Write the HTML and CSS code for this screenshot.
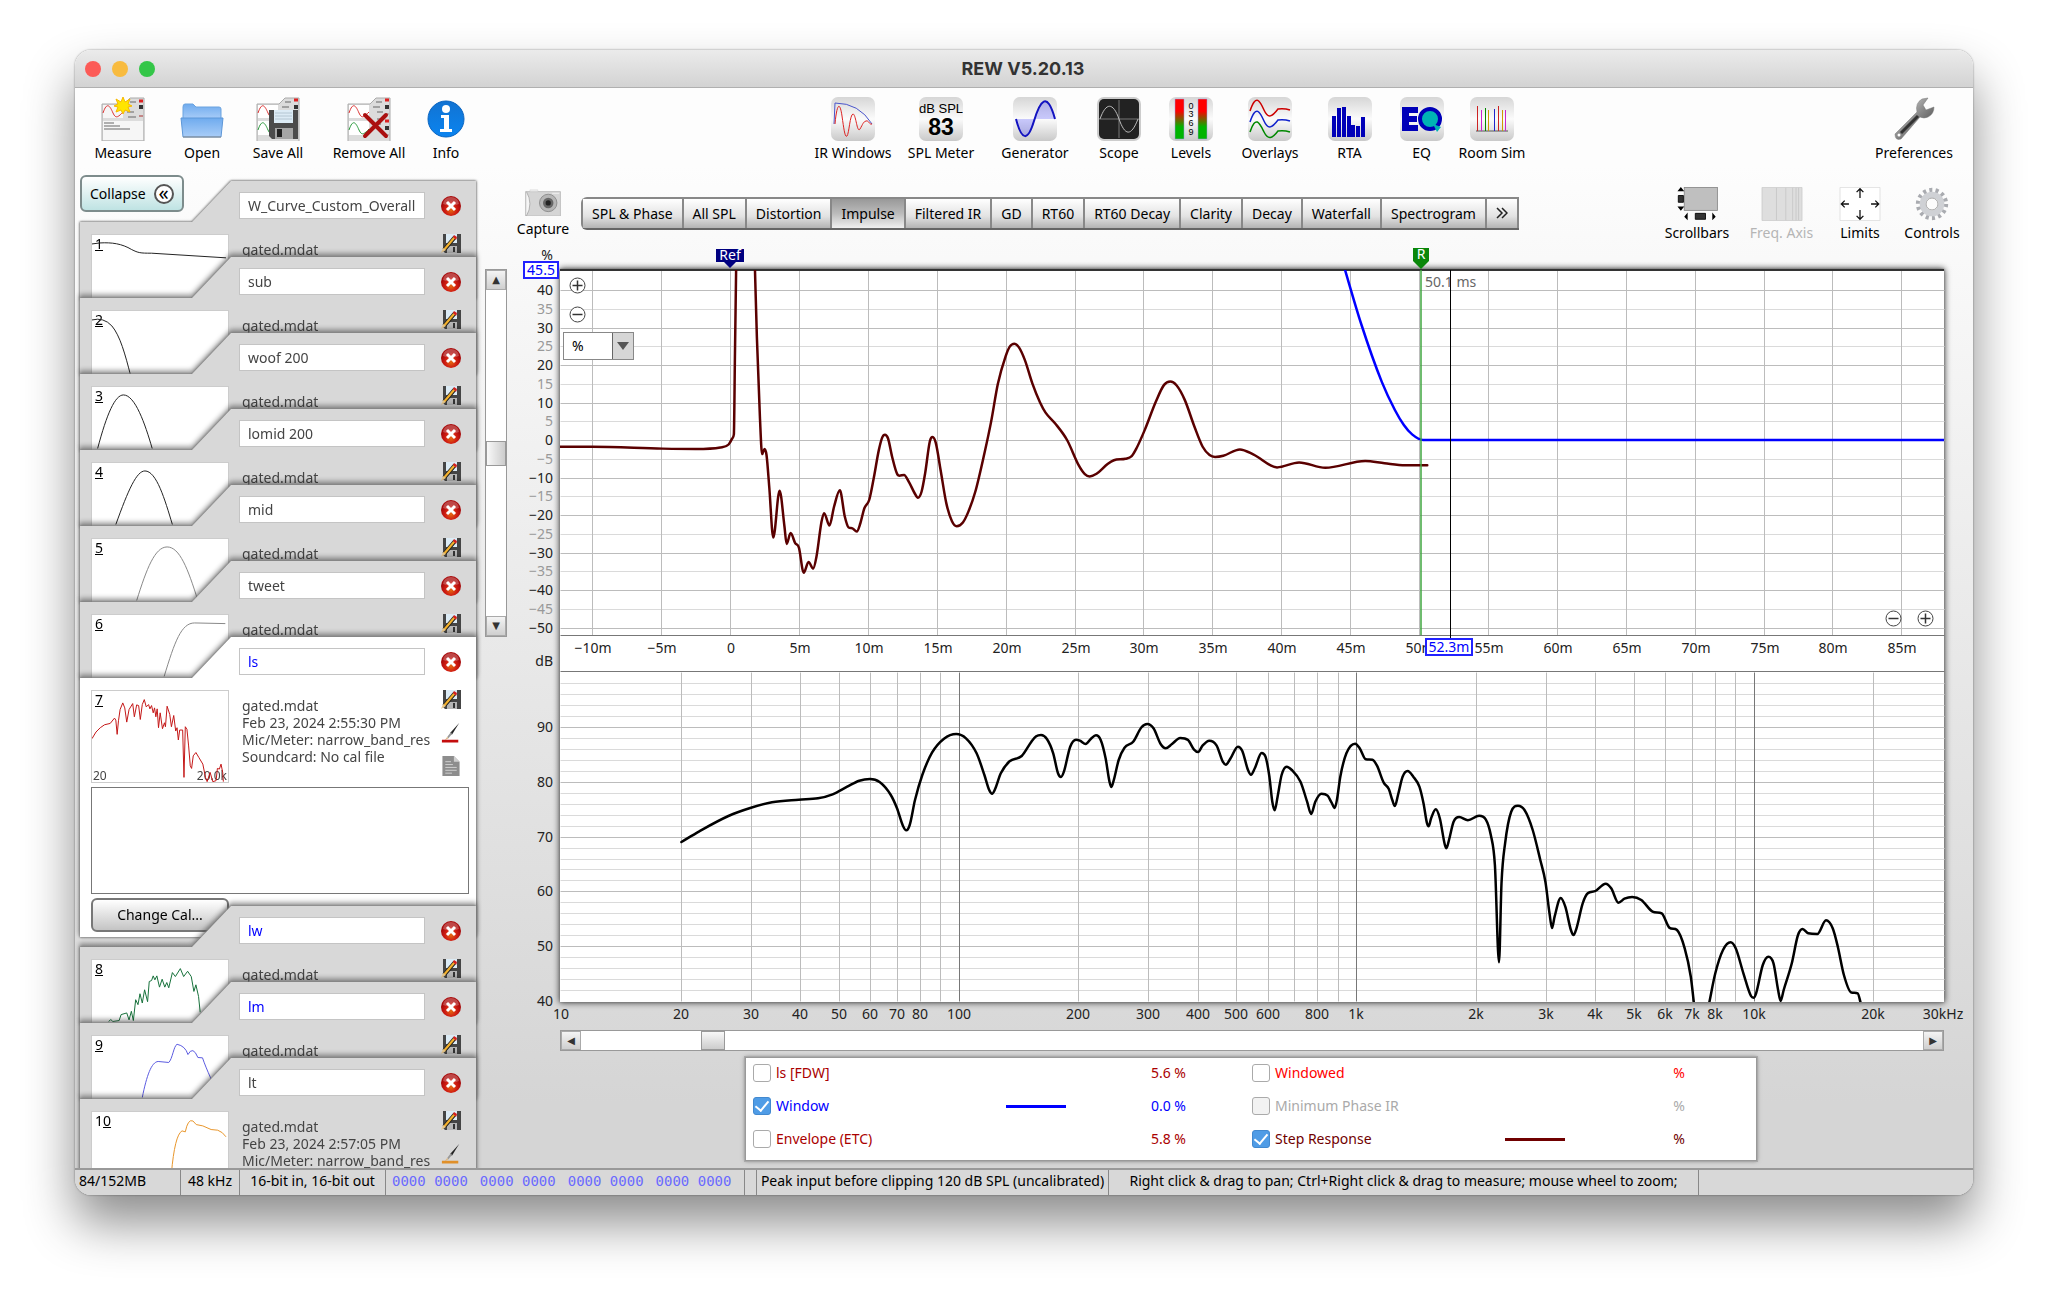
FILE: index.html
```html
<!DOCTYPE html>
<html lang="en">
  <head>
    <title>REW V5.20.13</title>
    <meta charset="utf-8">
    <meta name="viewport" content="width=device-width, initial-scale=1">
    <link rel="stylesheet" href="styles.css">
  </head>
  <body>
    <!-- shared icons -->
    <svg class="defs" aria-hidden="true">
      <defs>
        <linearGradient id="tile" x2="0" y2="1"><stop offset="0" stop-color="#d6d6d6"/><stop offset=".5" stop-color="#fbfbfb"/><stop offset="1" stop-color="#c9c9c9"/></linearGradient>
        <linearGradient id="folder" x2="0" y2="1"><stop offset="0" stop-color="#6fabee"/><stop offset="1" stop-color="#a9cdf8"/></linearGradient>
        <linearGradient id="steel" x2="1" y2="1"><stop offset="0" stop-color="#eee"/><stop offset=".5" stop-color="#888"/><stop offset="1" stop-color="#333"/></linearGradient>
        <linearGradient id="level" x2="0" y2="1"><stop offset=".3" stop-color="#f00"/><stop offset=".7" stop-color="#00b400"/></linearGradient>
        <linearGradient id="info" x2="0" y2="1"><stop offset="0" stop-color="#1273d2"/><stop offset="1" stop-color="#0a84f0"/></linearGradient>
        <radialGradient id="red" cy=".7"><stop offset="0" stop-color="#e46a10"/><stop offset=".6" stop-color="#cf1b12"/><stop offset="1" stop-color="#a80a0a"/></radialGradient>
      </defs>
      <symbol id="i-delete" viewBox="0 0 20 20">
        <circle cx="10" cy="10" r="10" fill="url(#red)"/>
        <path d="M2 8a8 7 0 0 1 16 0q-8 3-16 0" fill="#fff" opacity=".25"/>
        <path d="M6 6l8 8M14 6l-8 8" stroke="#fff" stroke-width="3"/>
      </symbol>
      <symbol id="i-save" viewBox="0 0 20 20">
        <path d="M2 0h18v19H4l-2-2z" fill="#454545"/>
        <path d="M5 0h11v9H5z" fill="#dcebf5"/>
        <path d="M6 12h10v7H6z" fill="#b5b5b5"/><path d="M12 13h2v5h-2z" fill="#333"/>
        <path d="M14 3L3 16" stroke="#222" stroke-width="4"/>
        <path d="M14 3L3 16" stroke="#f3b02c" stroke-width="2.500"/>
        <path d="M14 5L4 17" stroke="#222" stroke-width=".7"/>
        <path d="M13 1l3 2-1 3-3-3z" fill="#d21f1f"/><path d="M0 19l2-5 3 2z" fill="#e8c98e"/>
      </symbol>
      <symbol id="i-brush" viewBox="0 0 20 22">
        <path d="M19 0L9 11l2 2z" fill="#222"/><path d="M10 10l-4 5 1 2 4-5z" fill="#999"/><path d="M6 15l-3 4 4-2z" fill="#d9b98a"/>
        <path d="M0 20h18" stroke="currentColor" stroke-width="3"/>
      </symbol>
      <symbol id="i-notes" viewBox="0 0 20 21">
        <path d="M1 0h12l6 6v15H1z" fill="#8d8d8d"/><path d="M13 0l6 6h-6z" fill="#d0d0d0"/>
        <path d="M4 6h6M4 9h8M4 12h12M4 15h12M4 18h7" stroke="#d3d3d3" stroke-width="1"/>
      </symbol>
      <symbol id="i-sheet" viewBox="0 0 44 44">
        <path d="M1 44V7h22l6-6h14v43" fill="#dcdcdc" stroke="#aaa"/>
        <path d="M2 8h20v13H2zM2 24h20v14H2z" fill="#fff"/>
        <path d="M2 16c4-12 7-7 10 0s6 3 10-1" fill="none" stroke="#d33"/>
        <path d="M2 33c4-12 7-7 10 0s6 3 10-1" fill="none" stroke="#2a9a3c"/>
        <path d="M29 5h6M26 10h7M30 15h6M30 22h6M28 27h6" stroke="#666"/>
        <path d="M38 3h4M38 24h4" stroke="#d22" stroke-width="3"/><path d="M38 10h4M38 31h4" stroke="#333" stroke-width="4"/><path d="M38 17h4M38 38h4" stroke="#a88"/>
      </symbol>
      <symbol id="i-plus" viewBox="0 0 17 17"><circle cx="8.500" cy="8.500" r="7.500" fill="#fff" stroke="#444"/><path d="M3.500 8.500h10M8.500 3.500v10" stroke="#333" stroke-width="1.500"/></symbol>
      <symbol id="i-minus" viewBox="0 0 17 17"><circle cx="8.500" cy="8.500" r="7.500" fill="#fff" stroke="#444"/><path d="M3.500 8.500h10" stroke="#333" stroke-width="1.500"/></symbol>
    </svg>

    <div class="window">
      <header class="titlebar">
        <span class="light light-close"></span>
        <span class="light light-min"></span>
        <span class="light light-max"></span>
        <h1>REW V5.20.13</h1>
      </header>

      <nav class="toolbar">
        <div class="tools tools-file">
          <button class="tool"><svg viewBox="0 0 44 44">
            <path d="M1 44V7h22l6-6h14v43z" fill="#dcdcdc" stroke="#aaa"/>
            <path d="M2 8h20v13H2zM2 24h40v19H2z" fill="#f6f6f6"/>
            <path d="M2 16c4-12 7-7 10 0s6 3 10-1" fill="none" stroke="#d33"/>
            <path d="M3 26h10M3 29h16M3 32h26M29 5h6M26 15h7M27 20h8" stroke="#666"/>
            <path d="M38 4h4" stroke="#d22" stroke-width="3"/><path d="M38 10h4" stroke="#333" stroke-width="4"/><path d="M38 19h4" stroke="#a33"/>
            <path d="M22 0l2 5 5-3-2 5 4 2-4 1 2 5-5-2-2 4-2-4-5 2 2-5-4-1 4-2-2-5 5 3z" fill="#ffe500" stroke="#f5b800"/></svg>Measure</button>
          <button class="tool"><svg viewBox="0 0 44 44">
            <path d="M3 22V10q0-3 2-3h8l3 3h23q2 0 2 2v10z" fill="url(#folder)" stroke="#6ba3df"/>
            <path d="M1 21h42l-2 19H3z" fill="url(#folder)" stroke="#5d97d8"/><path d="M3 40h38" stroke="#888"/></svg>Open</button>
          <button class="tool"><svg viewBox="0 0 44 44"><use href="#i-sheet"/>
            <path d="M13 13h29v29H16l-3-3z" fill="#4b4b4b"/><path d="M18 13h19v13H18z" fill="#dcebf5"/><path d="M19 16h17M19 19h17M19 22h17" stroke="#b4c6d2"/>
            <path d="M19 31h18v11H19z" fill="#a5a5a5"/><path d="M21 32h5v8h-5z" fill="#222"/></svg>Save All</button>
          <button class="tool"><svg viewBox="0 0 44 44"><use href="#i-sheet"/>
            <path d="M18 18l21 21M39 18L18 39" stroke="#ab1010" stroke-width="4" stroke-linecap="round"/></svg>Remove All</button>
          <button class="tool"><svg viewBox="0 0 44 44">
            <circle cx="22" cy="22" r="18" fill="url(#info)" stroke="#0a64c0"/>
            <circle cx="22" cy="12" r="4" fill="#fff"/><path d="M17 18h8v14h3v3H16v-3h4V21h-3z" fill="#fff"/></svg>Info</button>
        </div>

        <div class="tools tools-view">
          <button class="tool"><svg viewBox="0 0 44 44"><rect width="44" height="44" rx="7" fill="url(#tile)"/>
            <path d="M3 27l1-21q24 0 37 21" fill="none" stroke="#4a55cc"/>
            <path d="M4 27c2-22 5-22 7-8s3 22 5 20 3-22 6-22 4 20 7 15 3-7 6-8 3 4 6 3" fill="none" stroke="#d22"/></svg>IR Windows</button>
          <button class="tool"><svg viewBox="0 0 44 44"><rect width="44" height="44" rx="7" fill="url(#tile)"/>
            <text class="spl-unit" x="22" y="16">dB SPL</text><text class="spl-value" x="22" y="38">83</text></svg>SPL Meter</button>
          <button class="tool"><svg viewBox="0 0 44 44"><rect width="44" height="44" rx="7" fill="url(#tile)"/>
            <path d="M3 22h39C36-1 30-1 24 16S12 54 3 22" fill="#00f" opacity=".2"/>
            <path d="M3 22c6 23 12 22 18 2S34-7 42 22" fill="none" stroke="#1313c0" stroke-width="2"/></svg>Generator</button>
          <button class="tool"><svg viewBox="0 0 44 44"><rect width="44" height="44" rx="7" fill="#ccc"/><rect x="2" y="2" width="40" height="40" rx="5" fill="#222"/>
            <path d="M2 22h40M22 3v38" stroke="#777"/><path d="M3 22c6-17 13-17 19 0s12 18 19 0" fill="none" stroke="#bbb"/></svg>Scope</button>
          <button class="tool"><svg viewBox="0 0 44 44"><rect width="44" height="44" rx="7" fill="url(#tile)"/>
            <path d="M6 2h9v40H6zM29 2h9v40h-9z" fill="url(#level)" stroke="#99d" stroke-width=".5"/>
            <text class="level-text" x="22" y="12">0</text><text class="level-text" x="22" y="20">3</text><text class="level-text" x="22" y="29">6</text><text class="level-text" x="22" y="38">9</text></svg>Levels</button>
          <button class="tool"><svg viewBox="0 0 44 44"><rect width="44" height="44" rx="7" fill="url(#tile)"/>
            <g fill="none" stroke-width="1.500"><path d="M2 14C8-4 12 4 16 13s8 7 14-1q6-1 12 1" stroke="#c00"/><path d="M2 25c6-18 10-10 14-1s8 7 14-1q6-1 12 1" stroke="#12c"/><path d="M2 35c6-18 10-8 14 0s8 7 14-1q6-1 12 1" stroke="#080"/></g></svg>Overlays</button>
          <button class="tool"><svg viewBox="0 0 44 44"><rect width="44" height="44" rx="7" fill="url(#tile)"/>
            <path d="M4 19h4v21H4zM9 11h4v29H9zM14 10h4v30h-4zM19 19h4v21h-4zM23 28h4v12h-4zM28 29h4v11h-4zM33 20h4v20h-4z" fill="#0000b8"/></svg>RTA</button>
          <button class="tool"><svg viewBox="0 0 44 44"><rect width="44" height="44" rx="7" fill="url(#tile)"/>
            <circle cx="30" cy="22" r="10" fill="#00b4b4" stroke="#0000b8" stroke-width="4"/>
            <path d="M2 10h16v6H9v3h8v6H9v3h9v6H2z" fill="#0000b8"/><path d="M33 27l8 3-4 5z" fill="#00b4b4"/></svg>EQ</button>
          <button class="tool"><svg viewBox="0 0 44 44"><rect width="44" height="44" rx="7" fill="url(#tile)"/>
            <path d="M6 34h32" stroke="#555"/><path d="M7.500 9v25M28.500 9v25" stroke="#c22"/><path d="M11.500 13v21M35.500 13v21" stroke="#c2c"/><path d="M15.500 11v23" stroke="#080"/><path d="M18.500 13v21M32.500 13v21" stroke="#c90"/><path d="M24.500 12v22" stroke="#22c"/></svg>Room Sim</button>
        </div>

        <div class="tools">
          <button class="tool"><svg viewBox="0 0 44 44">
            <path d="M3 37L25 15q-2-9 5-13l6-1-5 7 3 5 8-3q0 7-6 10-4 2-8 0L9 42q-6 2-6-5" fill="url(#steel)" stroke="#777" stroke-width=".5"/>
            <path d="M9 36l17-17" stroke="#333" stroke-width="3"/><circle cx="7" cy="38" r="1.500" fill="#fff"/></svg>Preferences</button>
        </div>
      </nav>

      <main class="main">
        <aside class="sidebar">
          <button class="collapse">Collapse <span>«</span></button>
          <ol class="cards">
            <li class="card"><div class="card-body">
              <div class="card-head"><input aria-label="Measurement 1 name" value="W_Curve_Custom_Overall"><button class="icon" aria-label="Remove"><svg><use href="#i-delete"/></svg></button></div>
              <div class="card-info">
                <div class="thumb"><b>1</b><svg viewBox="0 0 411 276"><path d="M0 27L24 24C60 22 90 26 120 44C140 54 145 55 180 55L405 69" stroke="#222"/></svg></div>
                <p>gated.mdat</p>
                <div class="card-actions"><button class="icon" aria-label="Save"><svg><use href="#i-save"/></svg></button></div>
              </div>
            </div></li>
            <li class="card"><div class="card-body">
              <div class="card-head"><input aria-label="Measurement 2 name" value="sub"><button class="icon" aria-label="Remove"><svg><use href="#i-delete"/></svg></button></div>
              <div class="card-info">
                <div class="thumb"><b>2</b><svg viewBox="0 0 411 276"><path d="M0 27Q35 18 60 45C85 75 100 130 117 196" stroke="#222"/></svg></div>
                <p>gated.mdat</p>
                <div class="card-actions"><button class="icon" aria-label="Save"><svg><use href="#i-save"/></svg></button></div>
              </div>
            </div></li>
            <li class="card"><div class="card-body">
              <div class="card-head"><input aria-label="Measurement 3 name" value="woof 200"><button class="icon" aria-label="Remove"><svg><use href="#i-delete"/></svg></button></div>
              <div class="card-info">
                <div class="thumb"><b>3</b><svg viewBox="0 0 411 276"><path d="M17 186C45 80 70 24 95 24C130 24 160 110 182 186" stroke="#222"/></svg></div>
                <p>gated.mdat</p>
                <div class="card-actions"><button class="icon" aria-label="Save"><svg><use href="#i-save"/></svg></button></div>
              </div>
            </div></li>
            <li class="card"><div class="card-body">
              <div class="card-head"><input aria-label="Measurement 4 name" value="lomid 200"><button class="icon" aria-label="Remove"><svg><use href="#i-delete"/></svg></button></div>
              <div class="card-info">
                <div class="thumb"><b>4</b><svg viewBox="0 0 411 276"><path d="M72 186C110 80 135 24 160 24C195 24 220 110 243 186" stroke="#222"/></svg></div>
                <p>gated.mdat</p>
                <div class="card-actions"><button class="icon" aria-label="Save"><svg><use href="#i-save"/></svg></button></div>
              </div>
            </div></li>
            <li class="card"><div class="card-body">
              <div class="card-head"><input aria-label="Measurement 5 name" value="mid"><button class="icon" aria-label="Remove"><svg><use href="#i-delete"/></svg></button></div>
              <div class="card-info">
                <div class="thumb"><b>5</b><svg viewBox="0 0 411 276"><path d="M135 186C165 90 190 24 227 24C265 24 290 90 320 186" stroke="#888"/></svg></div>
                <p>gated.mdat</p>
                <div class="card-actions"><button class="icon" aria-label="Save"><svg><use href="#i-save"/></svg></button></div>
              </div>
            </div></li>
            <li class="card"><div class="card-body">
              <div class="card-head"><input aria-label="Measurement 6 name" value="tweet"><button class="icon" aria-label="Remove"><svg><use href="#i-delete"/></svg></button></div>
              <div class="card-info">
                <div class="thumb"><b>6</b><svg viewBox="0 0 411 276"><path d="M218 186C250 80 270 24 310 24L403 26" stroke="#888"/></svg></div>
                <p>gated.mdat</p>
                <div class="card-actions"><button class="icon" aria-label="Save"><svg><use href="#i-save"/></svg></button></div>
              </div>
            </div></li>
            <li class="card selected"><div class="card-body">
              <div class="card-head"><input class="linked" aria-label="Measurement 7 name" value="ls"><button class="icon" aria-label="Remove"><svg><use href="#i-delete"/></svg></button></div>
              <div class="card-info">
                <div class="thumb"><b>7</b><svg viewBox="0 0 411 276"><polyline stroke="#c41616" points="0,144 12,124 25,111 38,102 55,98 68,82 72,88 76,131 80,90 85,56 93,36 99,51 105,94 112,56 123,38 128,78 135,42 141,44 146,86 152,41 158,26 164,48 171,41 175,54 180,44 185,66 189,51 193,78 197,54 201,111 206,66 213,114 219,96 222,108 227,46 235,71 240,108 247,74 253,121 257,111 261,148 265,118 274,118 278,261 282,108 287,116 292,166 297,226 301,234 306,196 314,186 323,201 335,221 343,261 348,274 357,246 365,274 375,271 379,234 385,236 390,221 395,246 397,274"/></svg><small>20</small><small>20.0k</small></div>
                <p>gated.mdat<br>Feb 23, 2024 2:55:30 PM<br>Mic/Meter: narrow_band_res<br>Soundcard: No cal file</p>
                <div class="card-actions">
                  <button class="icon" aria-label="Save"><svg><use href="#i-save"/></svg></button>
                  <button class="icon brush-red" aria-label="Trace colour"><svg><use href="#i-brush"/></svg></button>
                  <button class="icon" aria-label="Notes"><svg><use href="#i-notes"/></svg></button>
                </div>
              </div>
              <textarea aria-label="Measurement notes"></textarea>
              <button class="change-cal">Change Cal...</button>
            </div></li>
            <li class="card"><div class="card-body">
              <div class="card-head"><input class="linked" aria-label="Measurement 8 name" value="lw"><button class="icon" aria-label="Remove"><svg><use href="#i-delete"/></svg></button></div>
              <div class="card-info">
                <div class="thumb"><b>8</b><svg viewBox="0 0 411 276"><polyline stroke="#16713a" points="50,186 57,180 63,186 82,183 88,165 105,160 112,181 119,155 125,183 132,120 139,135 145,102 152,130 159,90 168,126 173,65 180,62 185,48 190,60 196,48 204,82 212,58 220,82 226,68 232,84 243,38 252,50 267,26 277,50 289,34 300,50 308,95 314,75 322,110 327,158"/></svg></div>
                <p>gated.mdat</p>
                <div class="card-actions"><button class="icon" aria-label="Save"><svg><use href="#i-save"/></svg></button></div>
              </div>
            </div></li>
            <li class="card"><div class="card-body">
              <div class="card-head"><input class="linked" aria-label="Measurement 9 name" value="lm"><button class="icon" aria-label="Remove"><svg><use href="#i-delete"/></svg></button></div>
              <div class="card-info">
                <div class="thumb"><b>9</b><svg viewBox="0 0 411 276"><path d="M152 186C165 120 180 78 200 77L232 80C243 70 247 30 257 25Q282 30 290 56Q305 28 320 65L334 66Q342 90 360 130" stroke="#5a5ae0"/></svg></div>
                <p>gated.mdat</p>
                <div class="card-actions"><button class="icon" aria-label="Save"><svg><use href="#i-save"/></svg></button></div>
              </div>
            </div></li>
            <li class="card"><div class="card-body">
              <div class="card-head"><input aria-label="Measurement 10 name" value="lt"><button class="icon" aria-label="Remove"><svg><use href="#i-delete"/></svg></button></div>
              <div class="card-info">
                <div class="thumb"><b><i>1</i>0</b><svg viewBox="0 0 411 276"><path d="M240 186Q250 70 272 57L282 60Q290 20 305 27L315 38L335 42L360 53L380 55Q395 60 405 75" stroke="#e8952a"/></svg></div>
                <p>gated.mdat<br>Feb 23, 2024 2:57:05 PM<br>Mic/Meter: narrow_band_res</p>
                <div class="card-actions">
                  <button class="icon" aria-label="Save"><svg><use href="#i-save"/></svg></button>
                  <button class="icon brush-orange" aria-label="Trace colour"><svg><use href="#i-brush"/></svg></button>
                </div>
              </div>
            </div></li>
          </ol>
        </aside>

        <section class="content">
          <div class="graph-bar">
            <button class="tool capture"><svg viewBox="0 0 40 31">
              <path d="M0 3h40v28H0z" fill="#d5d5d5" stroke="#bbb"/><path d="M5 1h9v2H5zM30 4h9v2h-9z" fill="#eee" stroke="#ccc" stroke-width=".5"/><path d="M1 3q8 14 0 28" fill="#f5f5f5" stroke="#aaa"/>
              <circle cx="26" cy="16" r="10" fill="#b5b5b5" stroke="#888"/><circle cx="26" cy="16" r="6" fill="#666"/><circle cx="26" cy="16" r="3" fill="#222"/></svg>Capture</button>
            <div class="tabs" role="tablist">
              <button role="tab">SPL &amp; Phase</button>
              <button role="tab">All SPL</button>
              <button role="tab">Distortion</button>
              <button role="tab" class="active" aria-selected="true">Impulse</button>
              <button role="tab">Filtered IR</button>
              <button role="tab">GD</button>
              <button role="tab">RT60</button>
              <button role="tab">RT60 Decay</button>
              <button role="tab">Clarity</button>
              <button role="tab">Decay</button>
              <button role="tab">Waterfall</button>
              <button role="tab">Spectrogram</button>
              <button aria-label="More graphs"><svg viewBox="0 0 12 12"><path d="M1 1l5 5-5 5M6 1l5 5-5 5"/></svg></button>
            </div>
            <div class="graph-tools">
              <button class="tool"><svg viewBox="0 0 48 40">
                <rect x="9" y=".5" width="39" height="27" fill="#bfbfbf" stroke="#888"/><path d="M2 10h6v8H2zM22 31h12v7H22z" fill="#333" stroke="#000"/><path d="M1 5l4-5 4 5zM1 23l4 5 4-5zM13 30v9l-4-4zM42 30v9l4-4z"/></svg>Scrollbars</button>
              <button class="tool" disabled><svg viewBox="0 0 48 40"><path d="M.500.500h47v39H.500z" fill="#dedede" stroke="#ccc"/><path d="M17.500 1v38M28.500 1v38M36.500 1v38M40.500 1v38M43.500 1v38" stroke="#c6c6c6"/></svg>Freq. Axis</button>
              <button class="tool"><svg viewBox="0 0 48 40"><path d="M.500.500h47v39H.500z" fill="#fff" stroke="#ddd"/><path d="M24 13V2M20 6l4-4 4 4M24 27v11M20 34l4 4 4-4M11 20H2M6 16l-4 4 4 4M37 20h9M42 16l4 4-4 4" fill="none" stroke="#111" stroke-width="1.500"/></svg>Limits</button>
              <button class="tool"><svg viewBox="0 0 48 40"><circle cx="24" cy="20" r="16" fill="none" stroke="#a9abb0" stroke-width="6" stroke-dasharray="3.500 3.680"/><circle cx="24" cy="20" r="11" fill="#fafafa" stroke="#cfd1d5" stroke-width="7"/><circle cx="24" cy="20" r="7" fill="#fcfcfc" stroke="#999"/></svg>Controls</button>
            </div>
          </div>

          <div class="graph-row">
            <div class="scrollbar scrollbar-v"><button aria-label="Up">▲</button><span></span><button aria-label="Down">▼</button></div>
            <div class="graph">
              <svg id="graph" viewBox="0 0 1458 790" role="img" aria-label="Step response and SPL"></svg>
              <button class="zoom zoom-y-in" aria-label="Zoom in vertically"><svg><use href="#i-plus"/></svg></button>
              <button class="zoom zoom-y-out" aria-label="Zoom out vertically"><svg><use href="#i-minus"/></svg></button>
              <select class="unit" aria-label="Y axis unit"><option>%</option><option>dBFS</option></select>
              <button class="zoom zoom-x-out" aria-label="Zoom out horizontally"><svg><use href="#i-minus"/></svg></button>
              <button class="zoom zoom-x-in" aria-label="Zoom in horizontally"><svg><use href="#i-plus"/></svg></button>
            </div>
          </div>

          <div class="scrollbar scrollbar-h"><button aria-label="Left">◀</button><span></span><button aria-label="Right">▶</button></div>

          <div class="legend">
            <div class="trace ls"><input type="checkbox" id="t-fdw"><label for="t-fdw">ls [FDW]</label><hr class="off"><output>5.6 %</output></div>
            <div class="trace windowed"><input type="checkbox" id="t-windowed"><label for="t-windowed">Windowed</label><hr class="off"><output>%</output></div>
            <div class="trace window-fn"><input type="checkbox" id="t-window" checked><label for="t-window">Window</label><hr><output>0.0 %</output></div>
            <div class="trace unavailable"><input type="checkbox" id="t-min" disabled><label for="t-min">Minimum Phase IR</label><hr class="off"><output>%</output></div>
            <div class="trace envelope"><input type="checkbox" id="t-etc"><label for="t-etc">Envelope (ETC)</label><hr class="off"><output>5.8 %</output></div>
            <div class="trace step"><input type="checkbox" id="t-step" checked><label for="t-step">Step Response</label><hr><output>%</output></div>
          </div>
        </section>
      </main>

      <footer class="status">
        <span class="s-memory">84/152MB</span>
        <span class="s-rate">48 kHz</span>
        <span class="s-bits">16-bit in, 16-bit out</span>
        <span class="s-digits"><i>0000 0000</i><i>0000 0000</i><i>0000 0000</i><i>0000 0000</i></span>
        <span class="s-gap"></span>
        <span class="s-peak">Peak input before clipping 120 dB SPL (uncalibrated)</span>
        <span class="s-hint">Right click &amp; drag to pan; Ctrl+Right click &amp; drag to measure; mouse wheel to zoom;</span>
      </footer>
    </div>
    <script src="graph.js"></script>
  </body>
</html>
```
FILE: styles.css
```css
:root {
  --font-size: 14px;
}

* {
  box-sizing: border-box;
}

body {
  background: #fff;
  color: #000;
  display: flex;
  font-family: "Noto Sans", "Open Sans", sans-serif;
  font-size: var(--font-size);
  height: 100vh;
  line-height: 18px;
  margin: 0;
  padding: 50px 75px 98px;
}

button,
input,
select,
textarea {
  color: inherit;
  font: inherit;
  margin: 0;
}

button {
  background: none;
  border: 0;
  padding: 0;
}

.defs {
  height: 0;
  position: absolute;
  width: 0;
}

.window {
  background: linear-gradient(#fdfdfd 0, #fdfdfd 10%, #d5d5d5 92%);
  border-radius: 16px;
  box-shadow: 0 0 2px rgba(0, 0, 0, 0.5), 0 28px 50px rgba(0, 0, 0, 0.45);
  display: flex;
  flex: 1;
  flex-direction: column;
  min-width: 0;
  overflow: hidden;
}

/* title bar */
.titlebar {
  align-items: center;
  background: linear-gradient(#ebebeb, #d3d3d3);
  border-bottom: 1px solid #b0b0b0;
  display: flex;
  flex: none;
  gap: 11px;
  height: 38px;
  padding: 0 10px;
}

.light {
  border-radius: 50%;
  height: 16px;
  width: 16px;
}

.light-close { background: #fc5b57; }
.light-min { background: #f8bb3f; }
.light-max { background: #34c648; }

.titlebar h1 {
  color: #333;
  flex: 1;
  font-family: Inter, sans-serif;
  font-size: 18px;
  font-weight: 700;
  margin: 0 83px 0 0;
  text-align: center;
}

/* toolbar */
.toolbar {
  display: flex;
  flex: none;
  height: 86px;
  justify-content: space-between;
  padding: 9px 14px 0 8px;
}

.tools {
  display: grid;
}

.tools-file {
  grid-template-columns: 80px 78px 74px 108px 46px;
}

.tools-view {
  grid-template-columns: 88px 88px 100px 68px 76px 82px 77px 67px 74px;
}

.tool {
  align-items: center;
  display: flex;
  flex-direction: column;
  gap: 3px;
  justify-content: flex-start;
  min-width: 0;
  white-space: nowrap;
}

.tool svg {
  height: 44px;
  width: 44px;
}

.tools:last-child {
  width: 90px;
}

.tool:disabled {
  color: #b5b5b5;
}

.spl-unit,
.spl-value,
.level-text {
  font-family: "Liberation Sans", sans-serif;
  text-anchor: middle;
}

.spl-unit { font-size: 13px; }
.spl-value { font-size: 23px; font-weight: 700; }
.level-text { font-size: 9px; }

.main {
  display: flex;
  flex: 1;
  min-height: 0;
  overflow: hidden;
}

/* measurement list */
.sidebar {
  flex: none;
  padding: 7px 9px 0 5px;
  position: relative;
  width: 410px;
}

.collapse {
  align-items: center;
  background: linear-gradient(#fff, #bfe3e3);
  border: 2px solid #7d8c8c;
  border-radius: 6px;
  display: flex;
  gap: 8px;
  height: 37px;
  left: 5px;
  padding: 0 8px;
  position: absolute;
  top: 1px;
}

.collapse span {
  border: 2px solid #555;
  border-radius: 50%;
  background: #fff;
  font-size: 20px;
  height: 20px;
  line-height: 14px;
  width: 20px;
}

.cards {
  list-style: none;
  margin: 0;
  padding: 0;
}

/* each card is taller than its slot and the next one lies over it */
.card {
  filter: drop-shadow(0 0 1px #777) drop-shadow(0 0 1px #888) drop-shadow(0 -3px 2px rgba(0, 0, 0, 0.35));
  height: 76px;
  position: relative;
}

.card:first-child {
  filter: drop-shadow(0 0 1px #777) drop-shadow(0 0 1px #888);
}

.card.selected {
  height: 269px;
}

.card-body {
  background: #d8d8d8;
  clip-path: polygon(0 41px, 112px 41px, 151px 0, 100% 0, 100% 100%, 0 100%);
  height: 118px;
  padding: 11px 7px 0 11px;
}

.card.selected .card-body {
  background: #fff;
  height: 300px;
}

.card:last-child .card-body {
  height: 200px;
}

.card-head {
  align-items: center;
  display: flex;
  gap: 16px;
  margin-left: 148px;
  padding-right: 8px;
}

.card-head input {
  background: #fff;
  border: 1px solid #c4c4c4;
  color: #444;
  flex: 1;
  height: 27px;
  min-width: 0;
  padding: 0 8px;
}

.card-head input.linked {
  color: #00f;
}

.icon,
.icon svg {
  display: block;
  height: 20px;
  width: 20px;
}

.card-info {
  color: #444;
  display: flex;
  gap: 13px;
  height: 93px;
  margin-top: 15px;
}

.card-info p {
  flex: 1;
  line-height: 17px;
  margin: 7px 0 0;
  min-width: 0;
  white-space: nowrap;
}

.thumb {
  background: #fff;
  border: 1px solid #ccc;
  display: flex;
  flex-wrap: wrap;
  justify-content: space-between;
  align-content: space-between;
  flex: none;
  padding: 0 1px;
  position: relative;
  width: 138px;
}

.thumb svg {
  inset: 0;
  fill: none;
  position: absolute;
  stroke-width: 3px;
}

.thumb b {
  color: #000;
  flex: 0 0 100%;
  font-weight: 400;
  padding-left: 2px;
  text-decoration: underline;
}

.thumb b i {
  display: inline-block;
  font-style: normal;
  text-decoration: none;
}

.thumb small {
  font-size: 12px;
  line-height: 12px;
}

.card-actions {
  display: flex;
  flex-direction: column;
  gap: 13px;
  margin-right: 8px;
}

.brush-red { color: #c40d0d; }
.brush-orange { color: #e0902a; }

.card textarea {
  border: 1px solid #777;
  display: block;
  height: 107px;
  margin-top: 4px;
  resize: none;
  width: 100%;
}

.change-cal {
  background: linear-gradient(#fff, #c4c4c4);
  border: 2px solid #777;
  border-radius: 6px;
  height: 34px;
  margin-top: 4px;
  width: 138px;
}

/* graph area */
.content {
  flex: 1;
  min-width: 0;
}

.graph-bar {
  align-items: flex-start;
  display: flex;
  height: 66px;
  padding: 10px 7px 0 24px;
}

.graph-bar .capture {
  gap: 4px;
  margin-top: 5px;
  width: 68px;
}

.graph-bar .capture svg {
  height: 27px;
  width: 40px;
}

.tabs {
  border: 2px solid #888;
  border-bottom-color: #666;
  border-radius: 6px 0 0 6px;
  border-right: 0;
  display: flex;
  flex: 0 1 938px;
  height: 33px;
  margin: 13px auto 0 4px;
}

.tabs button {
  background: linear-gradient(#fff, #e2e2e2 60%, #b4b4b4);
  border-right: 2px solid #888;
  flex: 1 0 auto;
  padding: 0 8px;
}

.tabs button.active {
  background: linear-gradient(#999, #bbb 50%, #f0f0f0);
}

.tabs svg {
  fill: none;
  height: 12px;
  stroke: #222;
  stroke-width: 1.5px;
  width: 12px;
}

.graph-tools {
  display: grid;
  grid-template-columns: 88px 81px 76px 68px;
}

.graph-tools .tool {
  gap: 0;
}

.graph-tools .tool svg {
  height: 40px;
  padding: 3px 0;
  width: 48px;
}

.graph-row {
  display: flex;
  gap: 8px;
}

.graph {
  flex: 1;
  min-width: 0;
  position: relative;
}

#graph {
  display: block;
  width: 100%;
}

#graph text {
  fill: #222;
}

#graph text.faint { fill: #999; }
#graph text.note { fill: #666; }
#graph text.cursor { fill: #00f; }
#graph text.marker { fill: #fff; }
#graph .major { stroke: #bcbcbc; }
#graph .minor { stroke: #dadada; }
#graph .decade { stroke: #777; }
#graph .grid { stroke-width: 1px; }

.panel {
  fill: #fff;
  filter: drop-shadow(0 0 1px #777) drop-shadow(0 0 3px rgba(0, 0, 0, 0.8));
}

.zoom,
.unit {
  position: absolute;
}

.zoom svg {
  display: block;
  height: 17px;
  width: 17px;
}

.zoom-y-in { left: 54px; top: 37px; }
.zoom-y-out { left: 54px; top: 66px; }
.zoom-x-out { right: 71px; top: 370px; }
.zoom-x-in { right: 39px; top: 370px; }

.unit {
  appearance: none;
  background:
    linear-gradient(#666, #666) 48px 0 / 1px 100% no-repeat,
    linear-gradient(90deg, #fff 48px, #d6d6d6 48px);
  border: 1px solid #888;
  border-radius: 0;
  height: 28px;
  left: 48px;
  padding: 0 8px;
  top: 92px;
  width: 71px;
}

.graph::after {
  border: 6px solid transparent;
  border-top: 8px solid #555;
  border-bottom: 0;
  content: "";
  left: 102px;
  pointer-events: none;
  position: absolute;
  top: 102px;
}

.scrollbar {
  background: #fff;
  border: 1px solid #999;
  display: flex;
  position: relative;
}

.scrollbar button {
  background: linear-gradient(#f4f4f4, #cfcfcf);
  border: 1px solid #aaa;
  color: #333;
  font-family: "DejaVu Sans", sans-serif;
  font-size: 10px;
  height: 20px;
  line-height: 10px;
  width: 20px;
}

.scrollbar span {
  background: linear-gradient(90deg, #f8f8f8, #ccc);
  border: 1px solid #999;
}

.scrollbar-v {
  flex: none;
  flex-direction: column;
  height: 368px;
  margin-top: 29px;
  width: 22px;
}

.scrollbar-v span {
  height: 25px;
  margin: 151px 0 auto;
}

.scrollbar-h {
  height: 21px;
  margin: 0 29px 0 75px;
}

.scrollbar-h button {
  height: 19px;
}

.scrollbar-h span {
  background: linear-gradient(#f8f8f8, #ccc);
  margin: 0 auto 0 120px;
  width: 24px;
}

.legend {
  background: #fff;
  border: 1px solid #999;
  box-shadow: 0 0 0 1px #aaa, 0 0 4px #777;
  display: grid;
  grid-auto-rows: 33px;
  grid-template-columns: 499px 499px;
  height: 104px;
  margin: 6px auto 0;
  max-width: 1012px;
  padding-left: 7px;
  position: relative;
  left: 22px;
}

.trace {
  align-items: center;
  display: grid;
  grid-template-columns: 18px 225px 60px 115px;
  column-gap: 5px;
  height: 30px;
}

.trace hr {
  border: 0;
  border-top: 3px solid;
  color: inherit;
  margin: 0;
  width: 60px;
}

.trace .off {
  visibility: hidden;
}

.trace output {
  text-align: right;
}

.trace input {
  appearance: none;
  background: #fff;
  border: 1px solid #aaa;
  border-radius: 3px;
  height: 18px;
  width: 18px;
}

.trace input:checked {
  background: #4f9ce6;
  border-color: #4289cf;
  display: grid;
  place-items: center;
}

.trace input:checked::after {
  border: solid #fff;
  border-width: 0 2px 2px 0;
  content: "";
  height: 11px;
  margin-bottom: 3px;
  rotate: 40deg;
  width: 6px;
}

.trace input:disabled {
  background: #f2f2f2;
}

.ls, .envelope { color: #a00; }
.windowed { color: #f00; }
.window-fn { color: #00f; }
.unavailable { color: #aaa; }
.step { color: #700000; }

/* status bar */
.status {
  background: #d8d8d8;
  border-top: 2px solid #999;
  display: flex;
  flex: none;
  height: 27px;
  line-height: 22px;
  white-space: nowrap;
}

.status > span {
  border-right: 1px solid #888;
  flex: none;
}

.s-memory { padding-left: 4px; width: 106px; }
.s-rate { text-align: center; width: 59px; }
.s-bits { text-align: center; width: 146px; }
.s-gap { width: 12px; }
.s-peak { text-align: center; width: 352px; }
.s-hint { text-align: center; width: 590px; }

.s-digits {
  color: #6a6aff;
  display: flex;
  font-family: "DejaVu Sans Mono", monospace;
  gap: 12px;
  padding-left: 6px;
  width: 359px;
}

.s-digits i {
  font-style: normal;
}
```
FILE: graph.js
```js
const graph = document.getElementById('graph');
const LEFT = 45;
const RIGHT = 1429;

// upper plot: ms and %
const timeX = ms => 215 + ms * 13.78;
const percentY = p => 200 - p * 3.75;
// lower plot: Hz and dB
const freqX = hz => 46 + 397.5 * Math.log10(hz / 10);
const dbY = db => 761 - (db - 40) * 5.48;

function add(name, attrs, text) {
  const el = document.createElementNS('http://www.w3.org/2000/svg', name);
  for (const key in attrs) el.setAttribute(key, attrs[key]);
  if (text !== undefined) el.textContent = text;
  graph.appendChild(el);
  return el;
}

// grid lines sit on half pixels to stay crisp
function line(x1, y1, x2, y2, cls) {
  const snap = v => Math.round(v) + 0.5;
  add('path', { d: `M${snap(x1)} ${snap(y1)}L${snap(x2)} ${snap(y2)}`, class: 'grid ' + cls });
}

function label(x, y, text, anchor, cls) {
  add('text', { x: Math.round(x), y: Math.round(y) + 5, 'text-anchor': anchor || 'middle', class: cls || '' }, text);
}

// smooth curve through the points, without overshoot
function smooth(points) {
  const n = points.length;
  const slope = [];
  const m = [];
  for (let i = 0; i < n - 1; i++) slope.push((points[i + 1][1] - points[i][1]) / (points[i + 1][0] - points[i][0]));
  for (let i = 0; i < n; i++) {
    const a = slope[Math.max(i - 1, 0)];
    const b = slope[Math.min(i, n - 2)];
    const limit = 3 * Math.min(Math.abs(a), Math.abs(b));
    const mean = (a + b) / 2;
    m.push(a * b <= 0 ? 0 : Math.sign(mean) * Math.min(Math.abs(mean), limit));
  }
  let d = `M${points[0][0]} ${points[0][1]}`;
  for (let i = 0; i < n - 1; i++) {
    const [x0, y0] = points[i];
    const [x1, y1] = points[i + 1];
    const h = (x1 - x0) / 3;
    d += `C${x0 + h} ${y0 + m[i] * h} ${x1 - h} ${y1 - m[i + 1] * h} ${x1} ${y1}`;
  }
  return d;
}

function curve(points, colour, width, clip) {
  add('path', { d: smooth(points), fill: 'none', stroke: colour, 'stroke-width': width, 'clip-path': `url(#${clip})`, 'stroke-linecap': 'round' });
}

const pairs = s => s.trim().split(/\s+/).map(p => p.split(',').map(Number));

const stepRise = pairs(`-12.3,-1.8 -10,-1.8 -4.9,-2.3 -2.5,-2.4 -0.7,-2 -0.1,-1.2 0.14,0.3 0.28,1.5 0.36,23 0.45,47`);
const stepRest = pairs(`1.8,47 1.95,27.5 2.17,6.2 2.33,-3.8 2.5,-2.4 2.65,-4 2.85,-12.6 3.14,-26 3.6,-13.5
  3.95,-23 4.11,-27.7 4.4,-24.8 4.73,-27.5 5,-28.7 5.35,-35.4 5.7,-32.5 6.03,-34.3 6.28,-31 6.64,-21.8 6.83,-19.5
  7.22,-22.8 7.55,-17.8 7.97,-13.4 8.33,-20.4 8.6,-23.3 8.9,-23.6 9.2,-24.4 9.46,-22.2 9.75,-18.2 10.1,-16
  10.43,-10.2 10.8,-2.7 11.05,0.7 11.24,1.4 11.47,0.4 11.76,-4.4 12.15,-9.2 12.3,-9.5 12.63,-9.3 13,-11.3 13.4,-14.2
  13.64,-15.4 13.9,-13.8 14.16,-8.9 14.5,-0.4 14.7,0.8 14.93,-0.7 15.3,-8.4 15.7,-16.9 16.1,-21.6 16.45,-23
  16.9,-22 17.3,-19.1 17.8,-13.8 18.46,-3.6 18.95,4.9 19.44,15 20,22.3 20.3,24.9 20.64,25.7 20.97,24.7 21.4,21.3
  21.94,15.1 22.5,10 22.9,7.3 23.6,4.4 24.46,0 25.3,-6.7 25.75,-9.1 26.1,-9.7 26.6,-9 27.4,-6.4 27.86,-5.4
  28.7,-5 29.15,-4.3 29.5,-2.2 30.1,2.7 30.9,10.2 31.5,14.7 31.95,15.6 32.4,14.6 33,10.7 33.7,3.6 34.3,-1.8 34.8,-4 35.2,-4.5
  35.8,-4.2 37,-2.5 38,-3.9 39.7,-7.3 41.3,-6 43.2,-7.4 46.1,-5.6 47.5,-6.2 49,-6.7 50.6,-6.7`);
const windowFn = pairs(`44.5,47 45.8,31 47.3,15.5 48.25,8 48.9,4 49.5,1.5 50.3,0 51,0 91,0`);

// plot pixels
const spl = pairs(`120.4,171 138.3,160.3 167.4,145 189.2,137 211,131.3 237.7,128.7 257,127.3 271.6,123.3 286.2,115.7
  298.3,109.7 309,108 318.6,111 329.8,124 336,137.3 341.9,154.7 345.3,159.3 348.7,154 354,129 361.3,104 371,81.7
  383,67.7 395.2,63 405,67.3 415.6,82.3 423.4,104 428.2,119 431.1,122.7 434,118.3 439.8,102.3 448.6,90.3 460.7,85
  470.4,70.7 475.2,65.3 480,64 485.9,68 492.2,82.3 497,102.3 500,106 502.9,100.7 509.2,75.7 515,68.7 518.9,69.7
  524.7,73 530,67.7 534.9,64.3 539.7,69 544.6,87.3 548.5,110.7 550.4,116 552.8,109 557.7,89 563.5,76.7 572.2,70.7
  580.5,56.3 586.3,53 592.5,57.3 599.8,73.3 604.7,77.3 611,73 619.2,67 627,69 632.8,78.3 637.1,81 641.5,74.7
  648.3,69.7 655.5,74.3 661.8,90.7 664.8,93.7 669.6,87.3 676.9,75.7 681.2,79.7 687,99 690,103.7 693.8,97.3 700.6,82
  704.5,85.7 708.4,105.7 711.3,130.7 713.7,139.3 716.6,125.7 720.6,104 725.7,95.7 730.8,99 739.5,110.7 746.1,130.7
  750.2,143 754.3,130.7 760.4,122.7 766.6,124.7 770.6,131.7 773.7,137 776.2,127.3 779.3,105.7 785.4,82.3 794.1,72.7
  798.7,77.3 804.8,88.3 811.4,88.7 816,94.7 822.7,111.7 827.8,118 831.3,129 833.9,135 837,124 841.6,105.7 846.7,100
  852.3,105.7 858.4,115.7 862.5,132.3 866,152.3 867.6,155.3 870.1,147.3 874.7,138.3 878.8,147.3 883.9,174 885.4,177.3
  888,169 892.6,150.7 898.2,146 906.9,149.3 918.1,144.7 924.7,148.3 929.8,164 933.9,194 938,291.3 940.5,212.3
  944.1,172.3 950.2,140.7 956.9,134.7 963.5,139 971.7,159 979.3,189 984.4,210.7 988.5,242.3 991,257 993.6,245.7
  999.7,227 1004.3,235.7 1009.9,259 1012.5,264 1015.5,257.3 1021.7,232.3 1026.8,222.3 1034.4,220 1044.6,212.7
  1050.2,217.3 1057.4,231.7 1063.5,227.7 1071.1,226 1080.3,229 1091.6,240.7 1100.7,242.3 1108.4,256.7 1116,259
  1123.7,277.3 1129.8,305.7 1132.9,332`);
const splHigh = pairs(`1148.2,332 1154.3,302.3 1162,279 1169.6,271.3 1174.7,277.3 1182.4,302.3 1190,325 1192.6,326.7
  1195.1,322.3 1201.8,294 1207.4,285.7 1212.5,292.3 1217.1,319 1219.6,330 1222.7,319 1230.8,292.3 1237,264 1241.6,258
  1247.2,262.3 1256.3,263 1265,249.3 1271.7,257.3 1276.8,275.7 1282.9,304 1290,321.3 1296.7,322.3 1299.7,332`);

const clips = add('defs', {});
clips.innerHTML = '<clipPath id="upper"><rect x="45" y="30" width="1384" height="365"/></clipPath>' +
  '<clipPath id="lower"><rect x="45" y="431" width="1384" height="331"/></clipPath>';

add('rect', { x: LEFT, y: 29, width: RIGHT - LEFT, height: 733, class: 'panel' });

// upper grid
for (let p = -50; p <= 40; p += 5) {
  const major = p % 10 === 0;
  line(LEFT, percentY(p), RIGHT, percentY(p), major ? 'major' : 'minor');
  label(38, percentY(p), p < 0 ? '−' + -p : p, 'end', major ? '' : 'faint');
}
for (let ms = -10; ms <= 85; ms += 5) {
  line(timeX(ms), 30, timeX(ms), 395, 'major');
  label(timeX(ms) + 1, 408, ms === 0 ? '0' : (ms < 0 ? '−' + -ms : ms) + 'm');
}
line(LEFT, 395, RIGHT, 395, 'decade');
line(LEFT, 431, RIGHT, 431, 'decade');
add('path', { d: `M${LEFT} 30H${RIGHT}`, stroke: '#333', 'stroke-width': 2 });
label(38, 15, '%', 'end');
label(38, 421, 'dB', 'end');

// lower grid
for (let db = 42; db < 100; db += 2) {
  line(LEFT, dbY(db), RIGHT, dbY(db), db % 10 === 0 ? 'major' : 'minor');
}
for (let db = 40; db <= 90; db += 10) label(38, dbY(db), db, 'end');
for (let decade = 10; decade <= 10000; decade *= 10) {
  for (let n = 1; n < 10; n++) {
    const hz = n * decade;
    if (hz > 10 && hz < 30000) line(freqX(hz), 432, freqX(hz), 761, n === 1 ? 'decade' : 'major');
    if (hz > 30000 || hz === 90 || hz === 700 || hz === 900 || hz === 9000) continue;
    label(freqX(hz), 774, hz === 30000 ? '30kHz' : hz >= 1000 ? hz / 1000 + 'k' : hz);
  }
}

curve(windowFn.map(([x, y]) => [timeX(x), percentY(y)]), '#00f', 2.5, 'upper');
curve(stepRise.map(([x, y]) => [timeX(x), percentY(y)]), '#5a0000', 2.5, 'upper');
curve(stepRest.map(([x, y]) => [timeX(x), percentY(y)]), '#5a0000', 2.5, 'upper');
curve(spl.map(([x, y]) => [x + 46, y + 431]), '#000', 2.5, 'lower');
curve(splHigh.map(([x, y]) => [x + 46, y + 431]), '#000', 2.5, 'lower');

// markers
add('path', { d: 'M201 9h28v13h-8l-6 6-6-6h-8z', fill: '#000080' });
label(215, 15, 'Ref', 'middle', 'marker');
add('path', { d: 'M906 30V395', stroke: '#3fa63f', 'stroke-width': 1.5 });
add('path', { d: 'M898 8h16v13l-8 8-8-8z', fill: '#0a870a' });
label(906, 14, 'R', 'middle', 'marker');
add('path', { d: 'M935.5 30V398', stroke: '#000', 'stroke-width': 1 });
label(910, 42, '50.1 ms', 'start', 'note');

// cursor read-outs
add('rect', { x: 911, y: 399, width: 46, height: 16, fill: '#fff', stroke: '#2222ff', 'stroke-width': 2 });
label(934, 407, '52.3m', 'middle', 'cursor');
add('rect', { x: 9, y: 22, width: 34, height: 16, fill: '#fff', stroke: '#2222ff', 'stroke-width': 2 });
label(26, 30, '45.5', 'middle', 'cursor');
```
